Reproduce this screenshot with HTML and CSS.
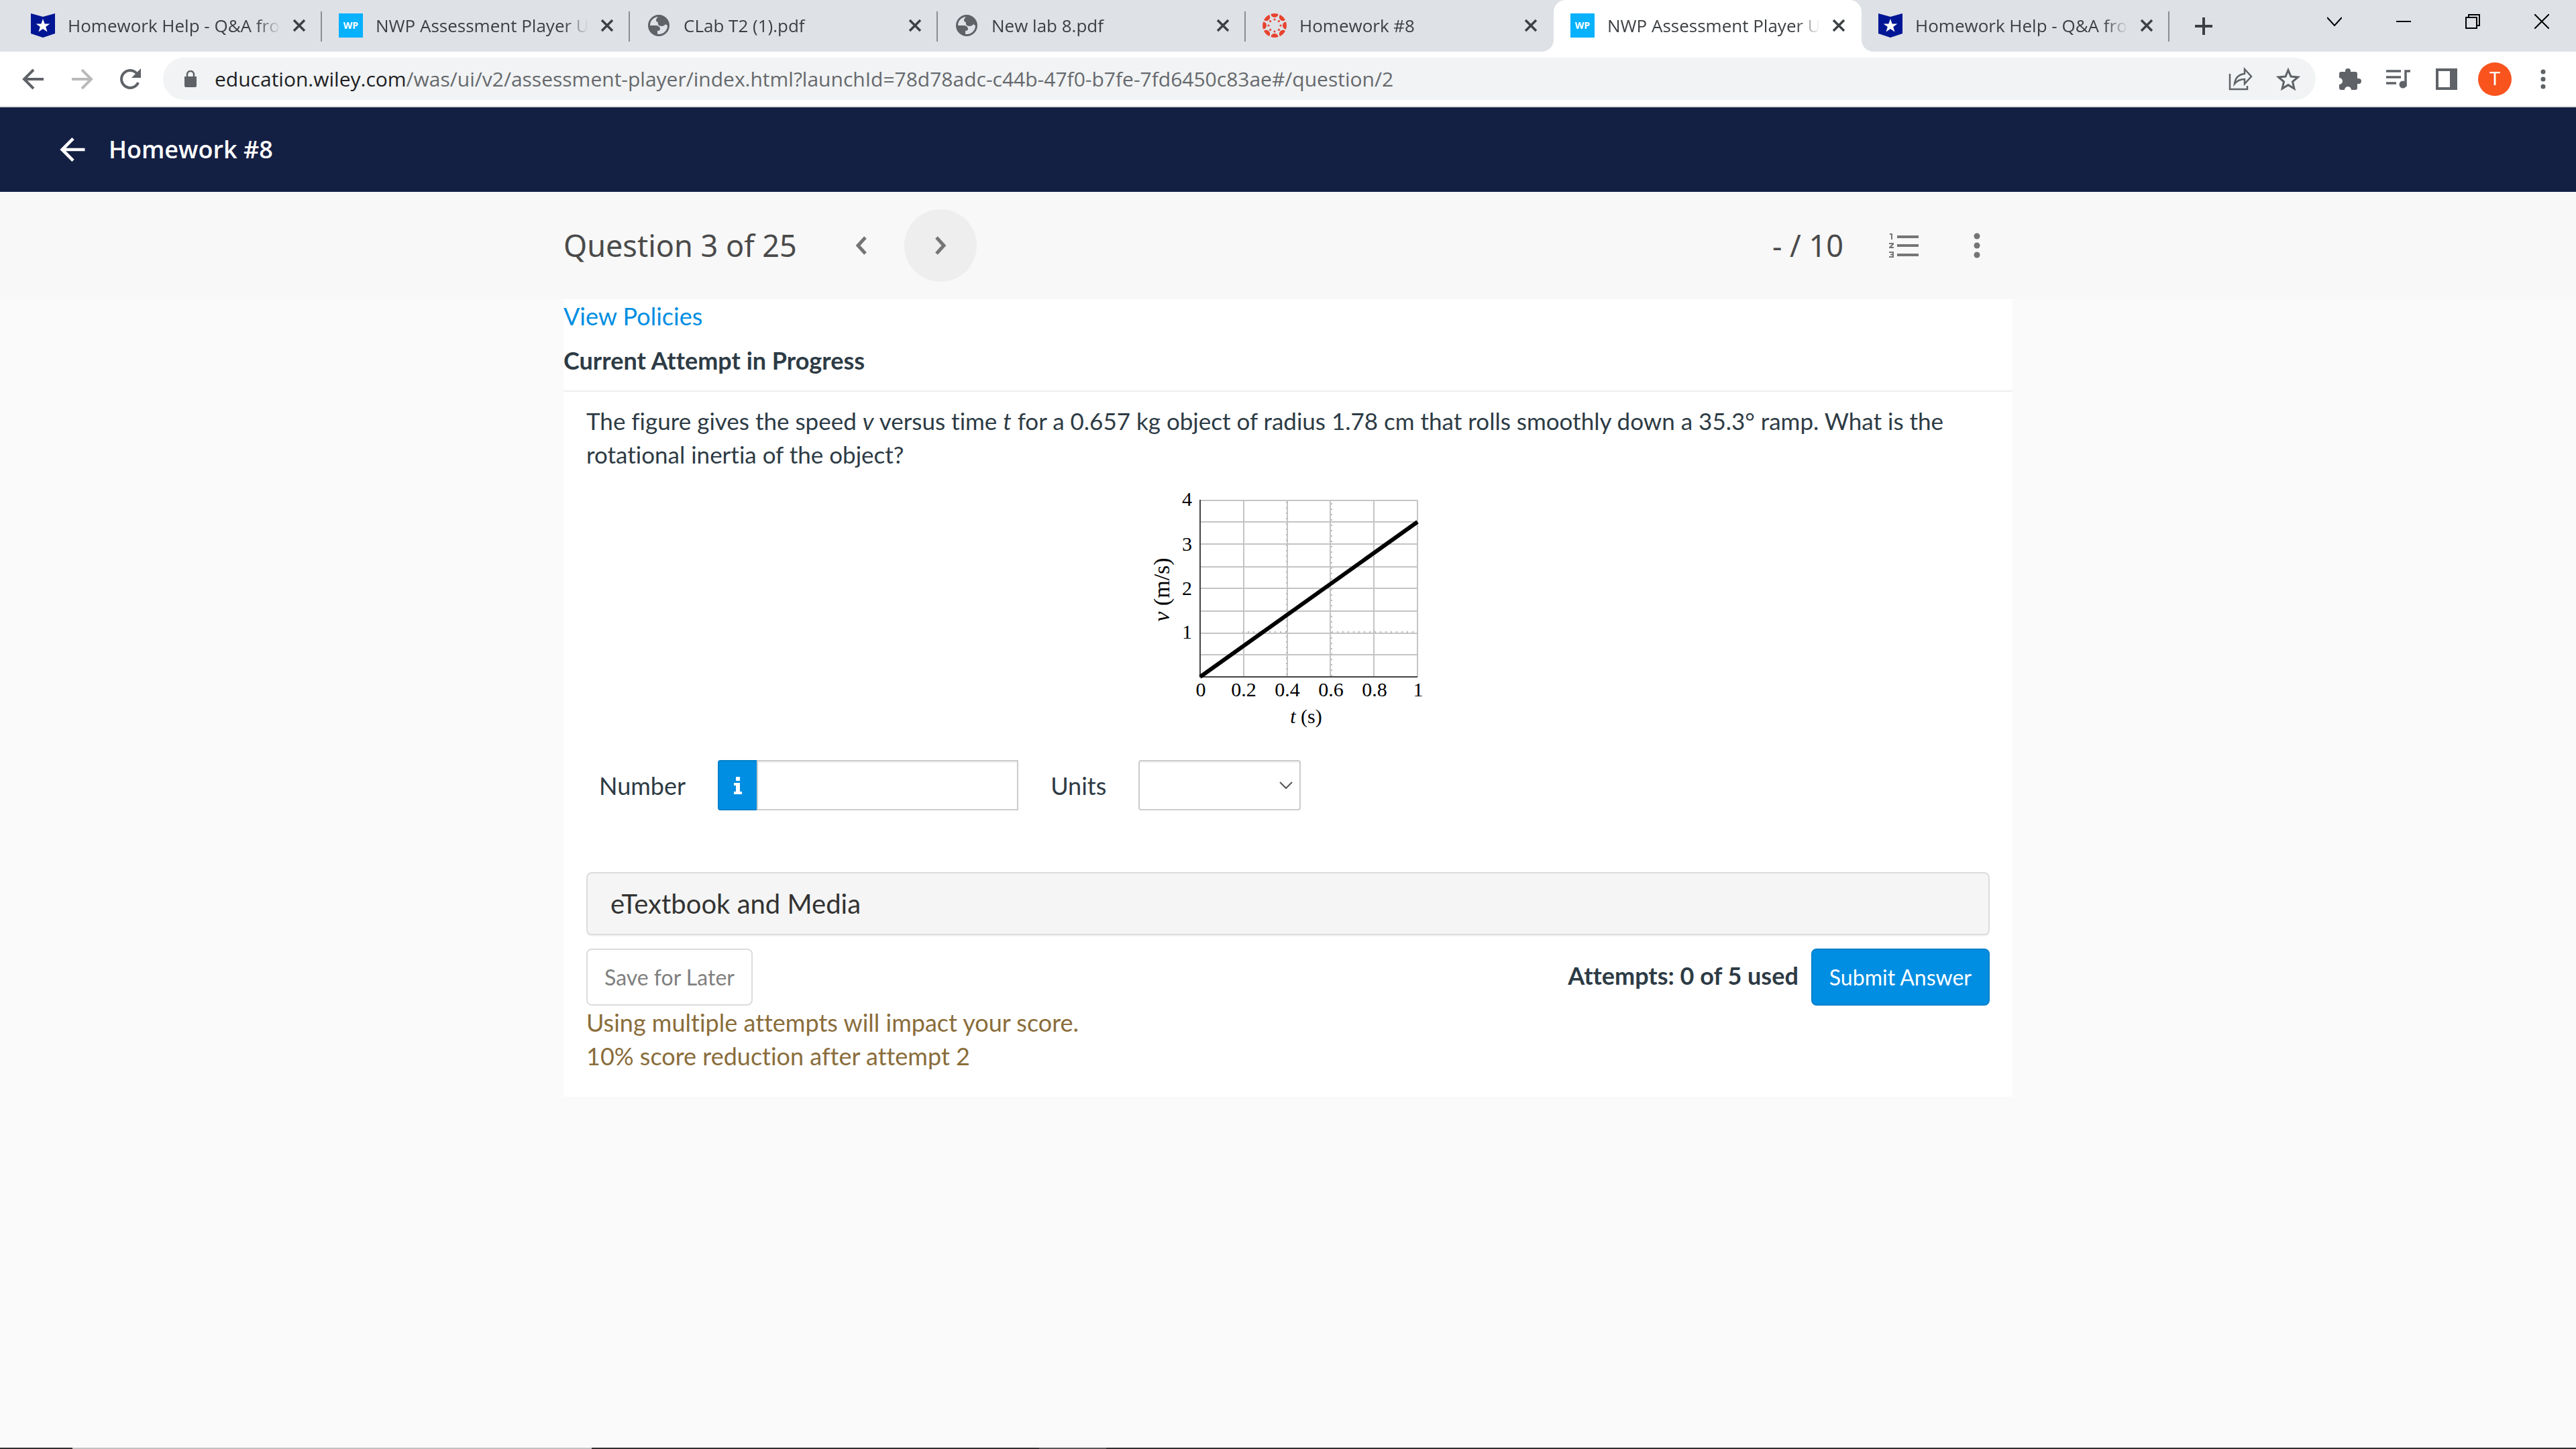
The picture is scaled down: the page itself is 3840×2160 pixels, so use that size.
FILE: index.html
```html
<!DOCTYPE html>
<html lang="en">
<head>
<meta charset="UTF-8">
<meta name="viewport" content="width=device-width, initial-scale=1">
<title>NWP Assessment Player UI Application</title>
<link rel="stylesheet" href="styles.css">
</head>
<body>

<!-- shared icons -->
<svg class="sprite" aria-hidden="true">
  <symbol id="i-bartleby" viewBox="0 0 36 36">
    <path fill="#001694" d="M0 0l18 5 18-5v30l-18 6-18-6z"/>
    <path fill="#fff" d="M18 8l2.600 7.400h7.800l-6.200 4.700 2.300 7.500-6.500-4.500-6.500 4.500 2.300-7.500-6.200-4.700h7.800z"/>
  </symbol>
  <symbol id="i-globe" viewBox="0 0 36 36">
    <circle cx="18" cy="18" r="14.500" fill="#dee1e6" stroke="#5f6368" stroke-width="3"/>
    <path fill="#5f6368" d="M18 4c-2 2-4 4-4 6 0 2 1 3 3 3-1 3 1 6 5 6 3 0 5-1 6-3l4 3c1-8-5-15-14-15z"/>
    <path fill="#5f6368" d="M4 18h9c4 0 7 2 7 5 0 2-1 3-4 3v6C9 31 4 25 4 18z"/>
  </symbol>
  <symbol id="i-canvas" viewBox="0 0 36 36">
    <g fill="#e8432f">
      <g id="c-seg"><path d="M12.500 1a17.600 17.600 0 0 1 11 0a5.500 5 0 0 1-11 0z"/><circle cx="18" cy="9" r="1.600"/></g>
      <use href="#c-seg" transform="rotate(45 18 18)"/>
      <use href="#c-seg" transform="rotate(90 18 18)"/>
      <use href="#c-seg" transform="rotate(135 18 18)"/>
      <use href="#c-seg" transform="rotate(180 18 18)"/>
      <use href="#c-seg" transform="rotate(225 18 18)"/>
      <use href="#c-seg" transform="rotate(270 18 18)"/>
      <use href="#c-seg" transform="rotate(315 18 18)"/>
    </g>
  </symbol>
  <symbol id="i-close" viewBox="0 0 20 20">
    <path d="M2 2l16 16M18 2L2 18" fill="none" stroke="#3c4043" stroke-width="3.500"/>
  </symbol>
  <symbol id="i-arrow" viewBox="0 0 36 36">
    <path d="M33 18H5M18 4L4 18l14 14" fill="none" stroke="currentColor" stroke-width="4"/>
  </symbol>
</svg>

<div class="tabs">
  <div class="tab">
    <svg class="favicon"><use href="#i-bartleby"/></svg>
    <span class="tab-title">Homework Help - Q&amp;A from</span>
    <button class="tab-close" aria-label="Close tab"><svg><use href="#i-close"/></svg></button>
  </div>
  <div class="tab">
    <span class="favicon wp">WP</span>
    <span class="tab-title">NWP Assessment Player UI</span>
    <button class="tab-close" aria-label="Close tab"><svg><use href="#i-close"/></svg></button>
  </div>
  <div class="tab">
    <svg class="favicon"><use href="#i-globe"/></svg>
    <span class="tab-title">CLab T2 (1).pdf</span>
    <button class="tab-close" aria-label="Close tab"><svg><use href="#i-close"/></svg></button>
  </div>
  <div class="tab">
    <svg class="favicon"><use href="#i-globe"/></svg>
    <span class="tab-title">New lab 8.pdf</span>
    <button class="tab-close" aria-label="Close tab"><svg><use href="#i-close"/></svg></button>
  </div>
  <div class="tab before-active">
    <svg class="favicon"><use href="#i-canvas"/></svg>
    <span class="tab-title">Homework #8</span>
    <button class="tab-close" aria-label="Close tab"><svg><use href="#i-close"/></svg></button>
  </div>
  <div class="tab active">
    <span class="favicon wp">WP</span>
    <span class="tab-title">NWP Assessment Player UI</span>
    <button class="tab-close" aria-label="Close tab"><svg><use href="#i-close"/></svg></button>
  </div>
  <div class="tab">
    <svg class="favicon"><use href="#i-bartleby"/></svg>
    <span class="tab-title">Homework Help - Q&amp;A from</span>
    <button class="tab-close" aria-label="Close tab"><svg><use href="#i-close"/></svg></button>
  </div>
  <button class="new-tab" aria-label="New tab">
    <svg width="28" height="28" viewBox="0 0 28 28"><path d="M14 1v26M1 14h26" stroke="#3c4043" stroke-width="4"/></svg>
  </button>
  <div class="window-buttons">
    <button aria-label="Search tabs"><svg viewBox="0 0 22 22"><path d="M0 5l11 12L22 5"/></svg></button>
    <button aria-label="Minimize"><svg viewBox="0 0 22 22"><path d="M0 11h22"/></svg></button>
    <button aria-label="Restore"><svg viewBox="0 0 22 22"><path d="M1 5h16v16H1zM5 5V1h16v16h-4"/></svg></button>
    <button aria-label="Close window"><svg viewBox="0 0 22 22"><path d="M0 0l22 22M22 0L0 22"/></svg></button>
  </div>
</div>

<div class="toolbar">
  <div class="nav-buttons">
    <button aria-label="Back"><svg viewBox="0 0 36 36"><use href="#i-arrow"/></svg></button>
    <button aria-label="Forward" disabled><svg class="flip" viewBox="0 0 36 36"><use href="#i-arrow"/></svg></button>
    <button aria-label="Reload">
      <svg viewBox="0 0 36 36"><path d="M30 23a13 13 0 1 1-2.500-14" fill="none" stroke="currentColor" stroke-width="4"/><path d="M34 2v14H20z" fill="currentColor"/></svg>
    </button>
  </div>
  <div class="address">
    <svg class="lock" viewBox="0 0 20 26"><path d="M1 9h18v14a2 2 0 0 1-2 2H3a2 2 0 0 1-2-2z" fill="#5f6368"/><path d="M5 10V6a5 5 0 0 1 10 0v4" fill="none" stroke="#5f6368" stroke-width="2.500"/></svg>
    <div class="url"><span class="host">education.wiley.com</span>/was/ui/v2/assessment-player/index.html?launchId=78d78adc-c44b-47f0-b7fe-7fd6450c83ae#/question/2</div>
    <button aria-label="Share">
      <svg viewBox="0 0 36 36"><path d="M2 10v23h26v-5M24 3l10 11-10 11v-7c-7 0-11 2-15 7 1-8 6-14 15-15z" fill="none" stroke="currentColor" stroke-width="2.500"/></svg>
    </button>
    <button aria-label="Bookmark">
      <svg viewBox="0 0 36 36"><path d="M18 4.500l4 9.600 10.400.9-7.900 6.800 2.400 10.200-8.900-5.400-8.900 5.400 2.400-10.200L3.600 15 14 14.100z" fill="none" stroke="currentColor" stroke-width="3"/></svg>
    </button>
  </div>
  <div class="tools">
    <button aria-label="Extensions">
      <svg viewBox="0 0 36 36"><path fill="currentColor" d="M31 17h-2v-7a3 3 0 0 0-3-3h-7V6a4 4 0 0 0-8 0v1H5a3 3 0 0 0-3 3v6a4.500 4.500 0 0 1 0 10v5a3 3 0 0 0 3 3h5a4.500 4.500 0 0 1 10 0h6a3 3 0 0 0 3-3v-6h2a4 4 0 0 0 0-8z"/></svg>
    </button>
    <button aria-label="Media controls">
      <svg viewBox="0 0 36 36"><path d="M0 6h22M0 15h22M0 24h15M29 29V6h7" fill="none" stroke="currentColor" stroke-width="3.500"/><circle cx="25" cy="26" r="5.500" fill="currentColor"/></svg>
    </button>
    <button aria-label="Side panel">
      <svg viewBox="0 0 36 36"><path d="M2 2h32v32H2zM6 6v24h17V6z" fill="currentColor" fill-rule="evenodd"/></svg>
    </button>
    <button class="avatar" aria-label="Profile">T</button>
    <button aria-label="Menu">
      <svg viewBox="0 0 36 36" fill="currentColor"><circle cx="18" cy="7" r="3.500"/><circle cx="18" cy="18" r="3.500"/><circle cx="18" cy="29" r="3.500"/></svg>
    </button>
  </div>
</div>

<header class="app-header">
  <a href="#" class="back" aria-label="Back to assignments"><svg viewBox="0 0 36 36"><use href="#i-arrow"/></svg></a>
  <h1>Homework #8</h1>
</header>

<nav class="question-bar">
  <div class="question-inner">
    <h2>Question 3 of 25</h2>
    <button class="round prev" aria-label="Previous question"><svg width="18" height="28" viewBox="0 0 18 28"><path d="M15 2L4 14l11 12"/></svg></button>
    <button class="round next" aria-label="Next question"><svg width="18" height="28" viewBox="0 0 18 28"><path d="M3 2l11 12L3 26"/></svg></button>
    <span class="points">- / 10</span>
    <button class="bar-icon" aria-label="Question list">
      <svg width="44" height="36" viewBox="0 0 44 36">
        <path d="M12 5h32M12 18h32M12 32h32" stroke="#757575" stroke-width="4"/>
        <path d="M1 1h3v8M0 15h6v1l-5 5h6M0 28h6v7H0M2 31.500h4" fill="none" stroke="#757575" stroke-width="2"/>
      </svg>
    </button>
    <button class="bar-icon" aria-label="More options">
      <svg width="10" height="38" viewBox="0 0 10 38" fill="#757575"><circle cx="5" cy="5" r="4.500"/><circle cx="5" cy="19" r="4.500"/><circle cx="5" cy="33" r="4.500"/></svg>
    </button>
  </div>
</nav>

<main class="card">
  <a href="#" class="policies">View Policies</a>
  <h3>Current Attempt in Progress</h3>
  <form class="question">
    <p class="prompt">The figure gives the speed <em>v</em> versus time <em>t</em> for a 0.657 kg object of radius 1.78 cm that rolls smoothly down a 35.3° ramp. What is the rotational inertia of the object?</p>

    <svg class="chart" width="400" height="360" viewBox="0 0 400 360" role="img" aria-label="Speed versus time">
      <path class="grid" d="M134 16v263M199 16v263M263 16v263M328 16v263M393 16v263M69 16h324M69 48h324M69 81h324M69 115h324M69 147h324M69 181h324M69 214h324M69 246h324"/>
      <path class="dots" d="M198 18v260M265 20v258M132 212h67M265 212h128"/>
      <path class="axis" d="M69 15v264h324"/>
      <path class="curve" d="M69 279L393 48"/>
      <g class="y-labels">
        <text x="57" y="24">4</text>
        <text x="57" y="91">3</text>
        <text x="57" y="157">2</text>
        <text x="57" y="222">1</text>
      </g>
      <g class="x-labels">
        <text x="70" y="308">0</text>
        <text x="134" y="308">0.2</text>
        <text x="199" y="308">0.4</text>
        <text x="264" y="308">0.6</text>
        <text x="329" y="308">0.8</text>
        <text x="394" y="308">1</text>
        <text x="227" y="348"><tspan class="var">t</tspan> (s)</text>
        <text class="y-title" transform="translate(23 149) rotate(-90)"><tspan class="var">v</tspan> (m/s)</text>
      </g>
    </svg>

    <div class="answer">
      <label for="number">Number</label>
      <div class="input-group">
        <button type="button" class="info" aria-label="Info"><svg width="14" height="26" viewBox="0 0 14 26" fill="#fff"><path d="M4 0h6v6H4zM1 9h9v13h3v4H1v-4h3v-9H1z"/></svg></button>
        <input type="text" id="number">
      </div>
      <label for="units">Units</label>
      <div class="select-wrap">
        <select id="units"><option></option></select>
        <svg width="20" height="12" viewBox="0 0 20 12"><path d="M1 1l9 9 9-9"/></svg>
      </div>
    </div>

    <button type="button" class="etextbook">eTextbook and Media</button>

    <div class="actions">
      <button type="button" class="btn save">Save for Later</button>
      <span class="attempts">Attempts: 0 of 5 used</span>
      <button type="button" class="btn submit">Submit Answer</button>
    </div>
    <p class="warning">Using multiple attempts will impact your score.<br>10% score reduction after attempt 2</p>
  </form>
</main>

<footer class="taskbar">
  <span class="search"></span>
  <span class="running"></span>
</footer>

</body>
</html>
```
FILE: styles.css
```css
* {
  box-sizing: border-box;
}
body {
  margin: 0;
  min-height: 100vh;
  display: flex;
  flex-direction: column;
  background: #fafafa;
  color: #2d3b45;
  font-family: Lato, sans-serif;
  font-size: 36px;
  line-height: 50px;
}
button {
  margin: 0;
  padding: 0;
  border: 0;
  background: none;
  color: inherit;
  font: inherit;
  cursor: pointer;
}
svg {
  display: block;
}
.sprite {
  position: absolute;
  width: 0;
  height: 0;
}

/* browser tabs */
.tabs {
  display: flex;
  height: 77px;
  padding-left: 21px;
  background: #dee1e6;
  font-family: "Open Sans", sans-serif;
  font-size: 26px;
  line-height: 36px;
  color: #3c4043;
}
.tab {
  position: relative;
  flex: 0 1 459px;
  min-width: 0;
  display: flex;
  align-items: center;
  padding: 0 16px 2px 25px;
}
.tab::after {
  content: "";
  position: absolute;
  right: 0;
  top: 17px;
  width: 2px;
  height: 45px;
  background: #8a8d91;
}
.tab.active::after,
.tab.before-active::after {
  display: none;
}
.favicon {
  flex: none;
  width: 36px;
  height: 36px;
  margin-right: 19px;
}
.wp {
  background: #07b1fc;
  color: #fff;
  font-size: 14px;
  font-weight: 700;
  text-align: center;
}
.tab-title {
  flex: 1;
  min-width: 0;
  overflow: hidden;
  white-space: nowrap;
  mask-image: linear-gradient(to right, #000 calc(100% - 36px), transparent);
}
.tab-close {
  flex: none;
  padding: 8px;
  margin-left: 10px;
}
.tab-close svg {
  width: 20px;
  height: 20px;
}
.tab.active {
  background: #fff;
  border-radius: 18px 18px 0 0;
}
.tab.active::before {
  content: "";
  position: absolute;
  left: -18px;
  right: -18px;
  bottom: 0;
  height: 18px;
  background:
    radial-gradient(circle at 0 0, transparent 18px, #fff 18px) left / 18px 18px no-repeat,
    radial-gradient(circle at 100% 0, transparent 18px, #fff 18px) right / 18px 18px no-repeat;
}
.new-tab {
  padding: 0 37px;
}
.window-buttons {
  display: flex;
  margin-left: auto;
  height: 64px;
}
.window-buttons button {
  width: 103px;
  display: grid;
  place-items: center;
}
.window-buttons svg {
  width: 22px;
  height: 22px;
  fill: none;
  stroke: #000;
  stroke-width: 2;
}

/* address row */
.toolbar {
  display: flex;
  align-items: center;
  height: 83px;
  background: #fff;
  border-bottom: 2px solid #dcdcdc;
  color: #5f6368;
  font-family: "Open Sans", sans-serif;
}
.toolbar svg {
  width: 36px;
  height: 36px;
}
.nav-buttons {
  display: flex;
  padding: 0 13px 0 14px;
}
.nav-buttons button {
  width: 72px;
  display: grid;
  place-items: center;
}
.nav-buttons button:disabled {
  color: #bababa;
}
.flip {
  transform: scaleX(-1);
}
.address {
  flex: 1;
  min-width: 0;
  display: flex;
  align-items: center;
  gap: 35px;
  height: 63px;
  padding: 0 23px 0 31px;
  border-radius: 32px;
  background: #f1f3f4;
}
.toolbar .lock {
  width: 20px;
  height: 26px;
  margin-right: -9px;
}
.url {
  flex: 1;
  min-width: 0;
  overflow: hidden;
  white-space: nowrap;
  font-size: 30px;
  line-height: 48px;
  color: #66696d;
}
.host {
  color: #202124;
}
.tools {
  display: flex;
  align-items: center;
  gap: 36px;
  padding: 0 31px 0 33px;
}
.avatar {
  width: 50px;
  height: 50px;
  margin: 0 -7px;
  border-radius: 50%;
  background: #f9531e;
  color: #fff;
  font-family: Roboto, sans-serif;
  font-size: 28px;
}

/* course header */
.app-header {
  display: flex;
  align-items: center;
  height: 126px;
  padding: 0 88px;
  background: #141f44;
  color: #fff;
}
.back {
  margin-right: 32px;
  color: #fff;
}
.back svg {
  width: 42px;
  height: 42px;
}
h1, h2, h3 {
  margin: 0;
}
h1 {
  font: 600 36px/50px "Open Sans", sans-serif;
}

.question-bar {
  background: #f8f8f8;
}
.question-inner {
  display: flex;
  align-items: center;
  max-width: 2160px;
  height: 160px;
  margin: 0 auto;
  color: #4a4a4a;
}
h2,
.points {
  font: 400 45px/60px "Noto Sans", sans-serif;
}
.round {
  width: 108px;
  height: 108px;
  border-radius: 50%;
  display: grid;
  place-items: center;
}
.round svg {
  fill: none;
  stroke: #757575;
  stroke-width: 5;
}
.prev {
  margin: 0 10px 0 42px;
}
.next {
  background: #eee;
}
.points {
  margin-left: auto;
}
.bar-icon {
  margin-left: 68px;
}
.bar-icon:last-child {
  margin: 0 48px 0 82px;
}

/* question card */
.card {
  width: 100%;
  max-width: 2160px;
  margin: 0 auto;
  background: #fff;
  font-variant-ligatures: none;
}
a {
  text-decoration: none;
}
.policies {
  display: block;
  color: #008ee2;
}
h3 {
  padding: 16px 0 20px;
  font-size: 36px;
  font-weight: 700;
  border-bottom: 2px solid #eee;
}
.question {
  padding: 18px 34px 36px;
}
p {
  margin: 0;
}
.prompt {
  font-size: 35px;
}
.chart {
  margin: 28px auto 43px;
  font-family: "Liberation Serif", serif;
  font-size: 30px;
  font-weight: 400;
}
.grid {
  fill: none;
  stroke: #c4c4c4;
  stroke-width: 2;
}
.dots {
  fill: none;
  stroke: #bbb;
  stroke-width: 2;
  stroke-dasharray: 2 6;
}
.axis {
  fill: none;
  stroke: #444;
  stroke-width: 2;
}
.curve {
  fill: none;
  stroke: #000;
  stroke-width: 6;
}
.y-labels {
  text-anchor: end;
}
.x-labels {
  text-anchor: middle;
}
.y-title {
  font-size: 34px;
}
.var {
  font-style: italic;
}
.answer {
  display: flex;
  align-items: center;
  padding-left: 19px;
}
.input-group {
  display: flex;
  width: 448px;
  margin: 0 48px;
}
.info {
  flex: none;
  width: 58px;
  display: grid;
  place-items: center;
  border: 2px solid #007fcb;
  border-right: 0;
  border-radius: 4px 0 0 4px;
  background: #008ee2;
}
.answer input,
.answer select {
  width: 100%;
  min-width: 0;
  height: 75px;
  border: 2px solid #ccc;
  background: #fff;
  font: inherit;
  box-shadow: inset 0 2px 2px #0000000f;
}
.select-wrap {
  position: relative;
  width: 242px;
  margin-left: 48px;
}
.answer select {
  appearance: none;
  border-radius: 4px;
}
.select-wrap svg {
  position: absolute;
  right: 12px;
  top: 32px;
  fill: none;
  stroke: #555;
  stroke-width: 2;
  pointer-events: none;
}
.etextbook {
  display: block;
  width: 100%;
  margin: 92px 0 20px;
  padding: 20px 34px;
  border: 2px solid #ddd;
  border-radius: 8px;
  background: #f5f5f5;
  box-shadow: 0 2px 2px #0000000d;
  color: #333;
  font-size: 40px;
  text-align: left;
}
.actions {
  display: flex;
  align-items: center;
}
.btn {
  height: 85px;
  padding: 0 25px;
  border: 2px solid #ddd;
  border-radius: 8px;
  font-size: 32px;
}
.save {
  color: #808080;
}
.attempts {
  margin: 0 19px 0 auto;
  padding-bottom: 6px;
  font-weight: 700;
}
.submit {
  border-color: #007fcb;
  background: #008ee2;
  color: #fff;
}
.warning {
  color: #8a6d3b;
}

/* sliver of the desktop taskbar */
.taskbar {
  display: flex;
  height: 2px;
  margin-top: auto;
  background: #312f30;
}
.search {
  width: 774px;
  margin-left: 108px;
  background: #c2c2c2;
}
.running {
  width: 100px;
  margin-left: 667px;
  background: #5a5858;
}
```
